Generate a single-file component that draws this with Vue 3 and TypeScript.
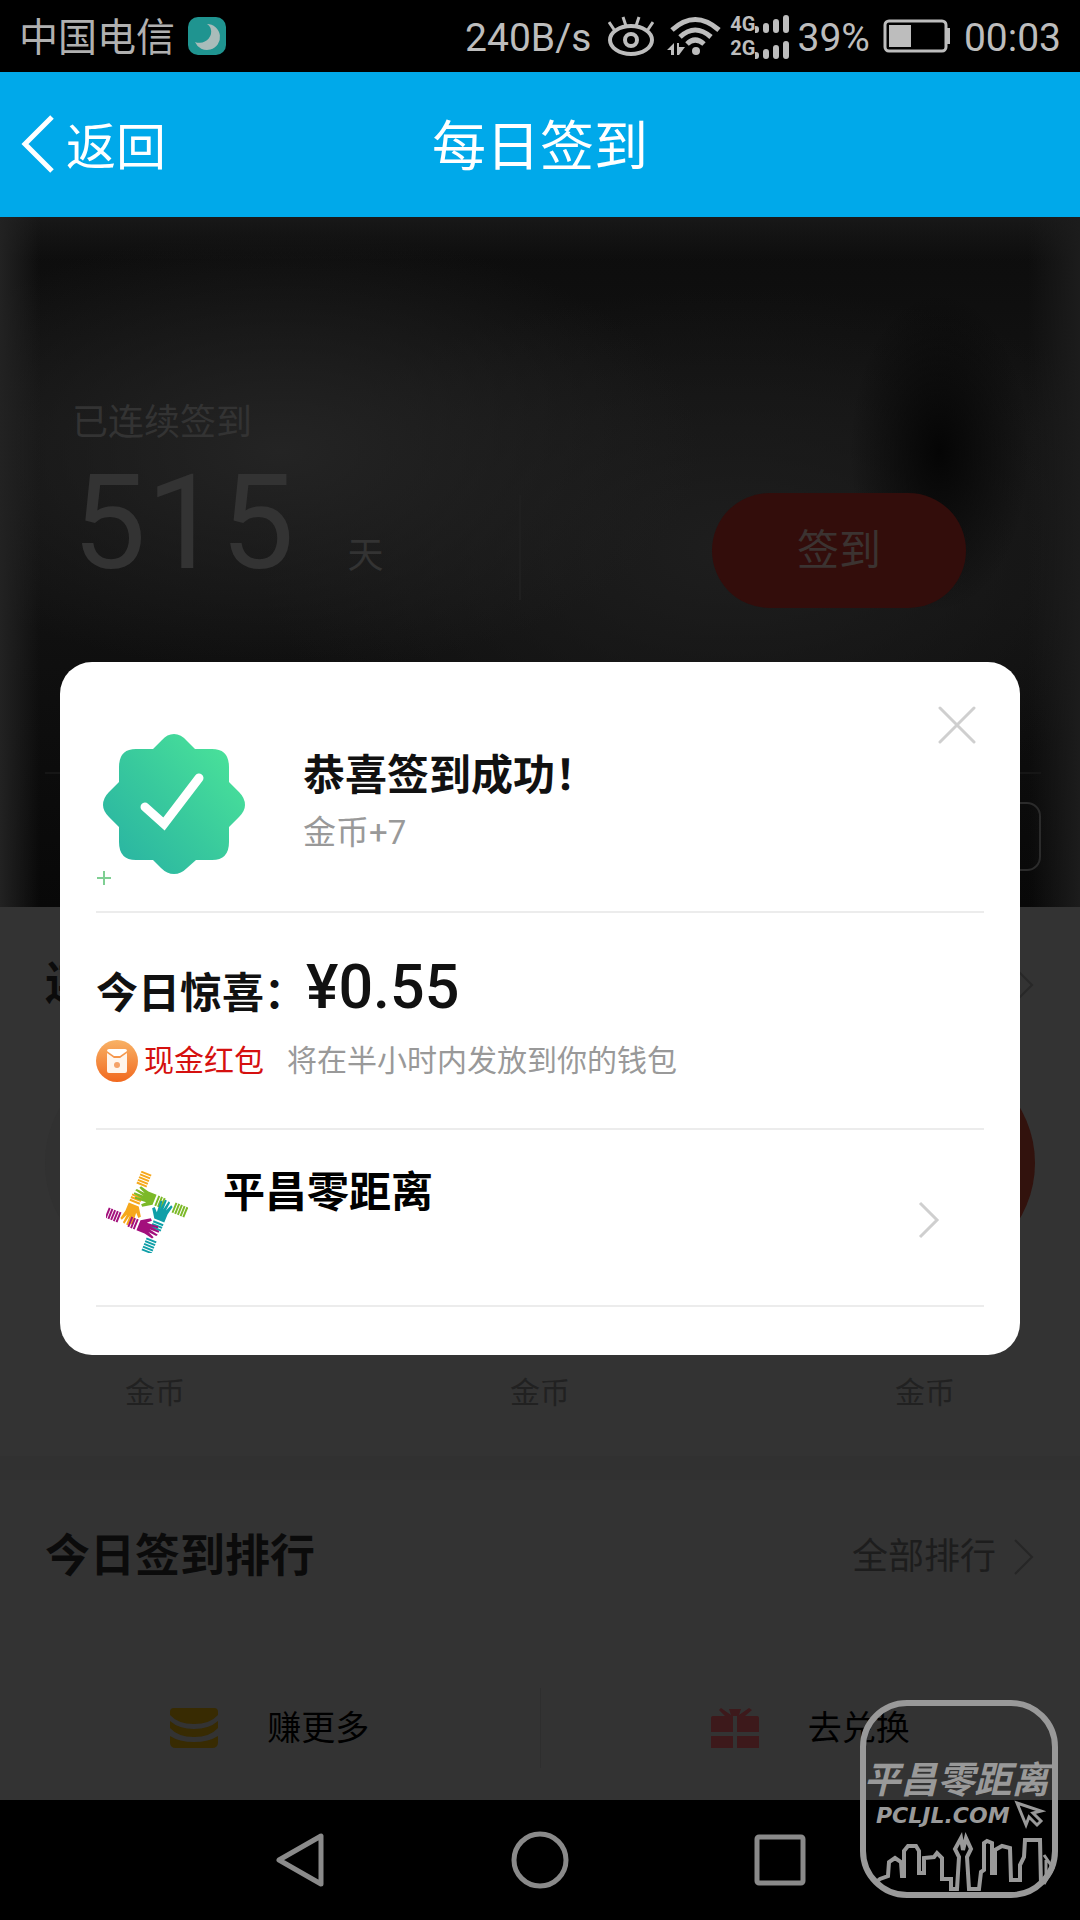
<script setup lang="ts">
import { ref } from 'vue'

interface Arm {
  color: string
  angle: number
}

const dialogOpen = ref(true)
const streakDays = 515
const rewards: { id: number; label: string; hot: boolean }[] = [
  { id: 1, label: '金币', hot: false },
  { id: 2, label: '金币', hot: false },
  { id: 3, label: '金币', hot: true },
]
const arms: Arm[] = [
  { color: '#f6a81c', angle: 0 },
  { color: '#7cb928', angle: 90 },
  { color: '#0f9fa8', angle: 180 },
  { color: '#a3107c', angle: 270 },
]
const stripes = [0, 3, 6, 9, 12, 25, 28, 31]
</script>

<template>
  <div class="page">
    <div class="status">
      <span class="carrier">中国电信</span>
      <svg class="moon" width="38" height="38" viewBox="0 0 38 38" aria-hidden="true">
        <rect width="38" height="38" rx="10" fill="#1f9490" />
        <path d="M19 7A13 13 0 1 1 7 25A12 12 0 0 0 23 17Q24 10 19 7Z" fill="#a9bcba" />
      </svg>
      <div class="status-right">
        <span class="status-text">240B/s</span>
        <svg class="eye" width="46" height="40" viewBox="0 0 46 40" fill="none" stroke="#bdbdbd" stroke-width="4" aria-hidden="true">
          <ellipse cx="23" cy="24" rx="21" ry="14" />
          <circle cx="23" cy="24" r="6" />
          <path d="M1 6L7 15M15 1L18 10M31 1L28 10M45 6L39 15" stroke-width="3" />
        </svg>
        <svg class="wifi" width="54" height="40" viewBox="0 0 54 40" fill="none" stroke="#bdbdbd" stroke-width="5" aria-hidden="true">
          <path d="M5 14Q28 -7 52 14M13 21Q28 7 44 21M20 28Q28 20 37 28" />
          <circle cx="29" cy="35" r="4" fill="#bdbdbd" stroke="none" />
          <path d="M0 34L7 27V39H4V34ZM10 39V27H12V31H18L12 39Z" fill="#bdbdbd" stroke="none" />
        </svg>
        <div class="net">
          <div class="net-labels"><span>4G</span><span>2G</span></div>
          <svg width="36" height="48" viewBox="0 0 36 48" fill="none" stroke="#bdbdbd" stroke-width="6" stroke-linecap="round" aria-hidden="true">
            <path d="M1 17V18M11 14V18M21 10V18M31 6V18M1 43V44M11 40V44M21 36V44M31 32V44" />
          </svg>
          <span class="status-text percent">39%</span>
        </div>
        <svg width="68" height="34" viewBox="0 0 68 34" fill="none" aria-hidden="true">
          <rect x="2" y="2" width="61" height="30" rx="4" stroke="#bdbdbd" stroke-width="3" />
          <rect x="6" y="6" width="22" height="22" fill="#bdbdbd" />
          <path d="M65 9V25" stroke="#bdbdbd" stroke-width="4" />
        </svg>
        <span class="status-text">00:03</span>
      </div>
    </div>

    <header class="topbar">
      <button class="back" type="button">
        <svg width="34" height="60" viewBox="0 0 34 60" fill="none" stroke="#fff" stroke-width="5" aria-hidden="true">
          <path d="M32 2L5 29L32 56" />
        </svg>
        <span class="bar-text">返回</span>
      </button>
      <h1 class="bar-text">每日签到</h1>
    </header>

    <main class="content">
      <section class="hero">
        <div class="hero-row">
          <div class="streak">
            <p class="streak-label">已连续签到</p>
            <p class="streak-count"><span class="number">{{ streakDays }}</span><span class="unit">天</span></p>
          </div>
          <span class="rule-v"></span>
          <button class="sign" type="button">签到</button>
        </div>
        <div class="hero-foot"><span class="ghost"></span></div>
      </section>

      <section class="rewards">
        <div class="head">
          <h2>连</h2>
          <svg width="22" height="38" viewBox="0 0 22 38" fill="none" stroke="#282828" stroke-width="2" aria-hidden="true"><path d="M2 2L19 19L2 36" /></svg>
        </div>
        <ul class="circles">
          <li v-for="item in rewards" :key="item.id">
            <span class="disc" :class="{ hot: item.hot }"></span>
            <span class="coin-label">{{ item.label }}</span>
          </li>
        </ul>
      </section>

      <section class="ranking">
        <div class="head">
          <h2>今日签到排行</h2>
          <a class="all" href="#ranking">全部排行
            <svg width="22" height="38" viewBox="0 0 22 38" fill="none" stroke="#262626" stroke-width="2" aria-hidden="true"><path d="M2 2L19 19L2 36" /></svg>
          </a>
        </div>
      </section>

      <nav class="tabs">
        <a href="#earn">
          <svg width="48" height="42" viewBox="0 0 48 42" fill="#382b02" aria-hidden="true">
            <path d="M4 1H44Q48 1 48 5V8Q40 17 24 17Q8 17 0 8V5Q0 1 4 1Z" />
            <path d="M0 14Q9 22 24 22Q39 22 48 14V21Q40 30 24 30Q8 30 0 21Z" />
            <path d="M0 29Q9 35 24 35Q39 35 48 29V35Q48 41 42 41H6Q0 41 0 35Z" />
          </svg>
          <span>赚更多</span>
        </a>
        <span class="tab-rule"></span>
        <a href="#exchange">
          <svg width="48" height="42" viewBox="0 0 48 42" fill="#3d191b" aria-hidden="true">
            <path d="M0 11Q0 9 2 9H14L8 3L10 1L20 8L18 2H30L28 8L38 1L41 3L34 9H46Q48 9 48 11V25H26V9H22V25H0Z" />
            <path d="M0 29H22V41H0ZM26 29H48V41H26Z" />
          </svg>
          <span>去兑换</span>
        </a>
      </nav>

      <div v-if="dialogOpen" class="overlay">
        <div class="dialog" role="dialog" aria-label="恭喜签到成功">
          <button class="close" type="button" aria-label="关闭" @click="dialogOpen = false">
            <svg width="38" height="38" viewBox="0 0 38 38" fill="none" stroke="#cfcfcf" stroke-width="3" stroke-linecap="round" aria-hidden="true"><path d="M2 2L36 36M36 2L2 36" /></svg>
          </button>

          <div class="success">
            <svg width="156" height="156" viewBox="0 0 156 156" aria-hidden="true">
              <defs>
                <linearGradient id="badge" x1="0.1" y1="0.9" x2="0.9" y2="0.2">
                  <stop offset="0" stop-color="#2ab5a2" />
                  <stop offset="0.5" stop-color="#38c99d" />
                  <stop offset="1" stop-color="#48df9a" />
                </linearGradient>
              </defs>
              <path fill="url(#badge)" d="M78 3Q85 3 91 10L99 18H116Q133 18 133 36V51L143 61Q149 67 149 74Q149 80 143 86L133 96V111Q133 129 116 129H100L91 137Q85 143 78 143Q71 143 65 137L57 129H40Q23 129 23 111V96L13 86Q7 80 7 74Q7 67 13 61L23 51V36Q23 18 40 18H57L66 9Q71 3 78 3Z" />
              <path d="M49 76L68 93L103 47" fill="none" stroke="#fff" stroke-width="9" stroke-linecap="round" />
              <path d="M1 147H15M8 140V154" stroke="#7fcf93" stroke-width="2" />
            </svg>
            <div class="success-text">
              <h3>恭喜签到成功！</h3>
              <p>金币+7</p>
            </div>
          </div>

          <div class="bonus">
            <p class="bonus-title">今日惊喜：<strong>¥0.55</strong></p>
            <p class="bonus-note">
              <svg width="42" height="42" viewBox="0 0 42 42" aria-hidden="true">
                <defs>
                  <linearGradient id="packet" x1="0" y1="0" x2="0" y2="1">
                    <stop offset="0" stop-color="#f8b266" />
                    <stop offset="1" stop-color="#f1691f" />
                  </linearGradient>
                </defs>
                <circle cx="21" cy="21" r="21" fill="url(#packet)" />
                <path d="M13 9H29Q31 9 31 11L24 16H18L11 11Q11 9 13 9Z" fill="#fff" />
                <path d="M11 13L18 18H24L31 13V31Q31 33 29 33H13Q11 33 11 31Z" fill="#fff5ec" />
                <circle cx="21" cy="25" r="3" fill="#f5a268" />
              </svg>
              <span class="cash">现金红包</span>
              <span class="when">将在半小时内发放到你的钱包</span>
            </p>
          </div>

          <a class="sponsor" href="#sponsor">
            <svg width="82" height="82" viewBox="0 0 84 84" aria-hidden="true">
              <g v-for="arm in arms" :key="arm.angle" :fill="arm.color" :transform="`rotate(${arm.angle} 41.5 42.5) translate(42 2) rotate(22)`">
                <rect v-for="y in stripes" :key="y" x="-6" :y="y" width="11" height="2" />
                <path d="M-6 35H5L11 44L9 46L5 42L6 54L4 55L3 47L2 57H0V47L-2 57L-4 56L-3 47L-6 54L-8 53L-6 44Z" />
              </g>
            </svg>
            <span class="sponsor-name">平昌零距离</span>
            <svg class="sponsor-chev" width="22" height="38" viewBox="0 0 22 38" fill="none" stroke="#cfcfcf" stroke-width="3" aria-hidden="true"><path d="M2 2L19 19L2 36" /></svg>
          </a>
        </div>
      </div>
    </main>

    <nav class="sysnav">
      <button type="button" aria-label="Back">
        <svg width="60" height="60" viewBox="0 0 60 60" fill="none" stroke="#8a8a8a" stroke-width="5" stroke-linejoin="round" aria-hidden="true"><path d="M9 30L51 6V54Z" /></svg>
      </button>
      <button type="button" aria-label="Home">
        <svg width="60" height="60" viewBox="0 0 60 60" fill="none" stroke="#8a8a8a" stroke-width="5" aria-hidden="true"><circle cx="30" cy="30" r="26" /></svg>
      </button>
      <button type="button" aria-label="Recent">
        <svg width="60" height="60" viewBox="0 0 60 60" fill="none" stroke="#8a8a8a" stroke-width="5" aria-hidden="true"><rect x="7" y="7" width="46" height="46" rx="2" /></svg>
      </button>
    </nav>

    <div class="stamp">
      <svg class="stamp-art" width="198" height="198" viewBox="0 0 198 198" fill="none" stroke="#999" stroke-width="4" aria-hidden="true">
        <rect x="3" y="3" width="192" height="192" rx="44" stroke-width="6" />
        <path d="M15 183L20 179L28 176L29 162L35 158L41 162L42 176H44V151L48 146H56L59 151V173H64V158L74 157L77 153L82 158V179H91V189H97L99 157L95 149L101 138L103 150L106 138L111 149L107 157L109 189H119L121 172L124 170V143L127 141L132 143V173H135V150L142 146L150 148L151 180H160V165L164 157L165 140H180L181 184" />
        <path d="M184 155L193 168L184 184M186 160V178" stroke-width="3" />
        <path d="M157 103L166 125L169 117L177 125L181 121L173 113L181 111Z" stroke-width="3" />
      </svg>
      <span class="stamp-name">平昌零距离</span>
      <span class="stamp-url">PCLJL.COM</span>
    </div>
  </div>
</template>

<style>
body {
  margin: 0;
  background: #000;
}
</style>

<style scoped>
.page {
  position: relative;
  display: flex;
  flex-direction: column;
  min-height: 100vh;
  background: #333;
  font-family: Roboto, "Noto Sans CJK SC", sans-serif;
  overflow: hidden;
}
h1, h2, h3, p, ul {
  margin: 0;
  padding: 0;
}
ul {
  list-style: none;
}
a {
  color: inherit;
  text-decoration: none;
}
button {
  border: 0;
  padding: 0;
  background: none;
  color: inherit;
  font: inherit;
  cursor: pointer;
}
svg {
  display: block;
  flex: none;
}
.status {
  display: flex;
  align-items: center;
  height: 72px;
  padding: 0 19px;
  background: #000;
  color: #bdbdbd;
  font-size: 39px;
  line-height: 68px;
}
.carrier {
  padding-top: 4px;
  color: #b0b0b0;
}
.status-text {
  padding-top: 3px;
}
.moon {
  margin-left: 13px;
}
.status-right {
  display: flex;
  align-items: center;
  gap: 13px;
  margin-left: auto;
}
.eye {
  margin-left: 4px;
}
.wifi {
  margin-right: -4px;
}
.net {
  display: flex;
  align-items: center;
}
.net-labels {
  display: flex;
  flex-direction: column;
  font-size: 20px;
  font-weight: 700;
  line-height: 24px;
}
.percent {
  margin-left: 6px;
}
.topbar {
  display: grid;
  grid-template-columns: 1fr auto 1fr;
  align-items: center;
  height: 145px;
  padding: 0 20px;
  background: #00a9ea;
  color: #fff;
}
.back {
  display: flex;
  align-items: center;
  gap: 12px;
  font-size: 50px;
}
.bar-text {
  padding-top: 6px;
  line-height: 72px;
}
h1 {
  font-size: 54px;
  font-weight: 400;
}
.content {
  position: relative;
  flex: 1;
  display: flex;
  flex-direction: column;
}
.hero {
  padding-top: 184px;
  color: #333;
  background:
    linear-gradient(90deg, #222 0, rgba(34, 34, 34, 0) 40px),
    linear-gradient(270deg, #1c1c1c 0, rgba(28, 28, 28, 0) 52px),
    linear-gradient(180deg, #181818 0, rgba(24, 24, 24, 0) 44px),
    radial-gradient(ellipse 90px 160px at 87% 34%, #050505 0, rgba(5, 5, 5, 0) 100%),
    radial-gradient(ellipse 420px 220px at 26% 34%, #242424 0, rgba(36, 36, 36, 0) 100%),
    radial-gradient(ellipse 480px 260px at 68% 48%, #1e1e1e 0, rgba(30, 30, 30, 0) 100%),
    linear-gradient(180deg, #0c0c0c 0, #131313 30%, #111 55%, #080808 100%);
}
.hero-row {
  display: flex;
  align-items: flex-end;
  padding: 0 114px 0 72px;
}
.streak {
  flex: 0 0 50%;
  padding-bottom: 19px;
}
.streak-label {
  font-size: 36px;
  line-height: 44px;
}
.streak-count {
  display: flex;
  align-items: baseline;
  gap: 53px;
  margin-top: 12px;
}
.number {
  font-size: 132px;
  line-height: 132px;
}
.unit {
  font-size: 36px;
  line-height: 44px;
}
.rule-v {
  width: 2px;
  height: 105px;
  margin-bottom: 8px;
  background: #1f1f1f;
}
.sign {
  width: 254px;
  height: 115px;
  margin-left: auto;
  padding-bottom: 9px;
  border-radius: 58px;
  background: #330d0b;
  color: #3b3331;
  font-size: 42px;
}
.hero-foot {
  display: flex;
  justify-content: flex-end;
  margin: 164px 39px 0 45px;
  padding: 28px 0 36px;
  border-top: 2px solid #161616;
}
.ghost {
  width: 160px;
  height: 69px;
  box-sizing: border-box;
  border: 2px solid #2b2b2b;
  border-radius: 14px;
}
.rewards {
  padding: 48px 45px 43px;
  border-bottom: 24px solid #313131;
}
.head {
  display: flex;
  align-items: center;
  justify-content: space-between;
}
h2 {
  color: #0b0b0b;
  font-size: 45px;
  line-height: 60px;
}
.circles {
  display: flex;
  justify-content: space-between;
  margin-top: 38px;
}
.circles li {
  display: flex;
  flex-direction: column;
  align-items: center;
  gap: 100px;
}
.disc {
  width: 220px;
  height: 220px;
  border-radius: 50%;
  background: #313131;
}
.disc.hot {
  background: #32120d;
}
.coin-label {
  color: #212121;
  font-size: 30px;
  line-height: 40px;
}
.ranking {
  flex: 1;
  padding: 47px 45px 0;
}
.all {
  display: flex;
  align-items: center;
  gap: 17px;
  color: #1d1d1d;
  font-size: 36px;
  line-height: 60px;
}
.tabs {
  display: flex;
  align-items: center;
  height: 144px;
  color: #000;
  font-size: 34px;
  line-height: 44px;
}
.tabs a {
  flex: 1;
  display: flex;
  align-items: center;
  justify-content: center;
  gap: 49px;
}
.tab-rule {
  width: 1px;
  height: 80px;
  background: #2e2e2e;
}
.overlay {
  position: absolute;
  inset: 0;
  display: flex;
  align-items: center;
  padding: 0 60px;
}
.dialog {
  position: relative;
  flex: 1;
  padding: 0 36px 48px;
  border-radius: 32px;
  background: #fff;
}
.close {
  position: absolute;
  top: 33px;
  right: 33px;
  display: flex;
  align-items: center;
  justify-content: center;
  width: 60px;
  height: 60px;
}
.success {
  display: flex;
  gap: 51px;
  padding: 69px 0 24px;
  border-bottom: 2px solid #ececec;
}
.success-text {
  padding-top: 17px;
}
h3 {
  color: #111;
  font-size: 42px;
  line-height: 56px;
}
.success-text p {
  margin-top: 7px;
  color: #999;
  font-size: 33px;
  line-height: 44px;
}
.bonus {
  padding: 44px 0 46px;
  border-bottom: 2px solid #ececec;
}
.bonus-title {
  display: flex;
  align-items: baseline;
  color: #111;
  font-size: 42px;
  font-weight: 700;
  line-height: 60px;
}
.bonus-title strong {
  font-size: 61px;
  font-weight: 500;
}
.bonus-note {
  display: flex;
  align-items: center;
  margin-top: 16px;
  font-size: 30px;
  line-height: 42px;
}
.cash {
  margin-left: 6px;
  color: #d5100f;
}
.when {
  margin-left: 23px;
  color: #999;
}
.sponsor {
  display: flex;
  align-items: center;
  padding: 41px 44px 52px 10px;
  border-bottom: 2px solid #ececec;
  color: #000;
}
.sponsor-name {
  flex: 1;
  align-self: flex-start;
  margin-left: 35px;
  font-size: 42px;
  font-weight: 700;
  line-height: 44px;
}
.sponsor-chev {
  align-self: flex-end;
  margin-bottom: 14px;
}
.sysnav {
  display: flex;
  align-items: center;
  justify-content: center;
  gap: 180px;
  height: 120px;
  background: #000;
}
.stamp {
  position: absolute;
  right: 22px;
  bottom: 22px;
  display: flex;
  flex-direction: column;
  align-items: center;
  width: 198px;
  height: 198px;
  box-sizing: border-box;
  padding-top: 58px;
  color: #999;
}
.stamp-art {
  position: absolute;
  inset: 0;
}
.stamp-name {
  margin-right: 6px;
  font-size: 37px;
  font-style: italic;
  font-weight: 700;
  line-height: 46px;
  white-space: nowrap;
}
.stamp-url {
  align-self: flex-start;
  margin-left: 16px;
  font-family: "DejaVu Sans", sans-serif;
  font-size: 22px;
  font-style: italic;
  font-weight: 700;
  line-height: 24px;
}
</style>
